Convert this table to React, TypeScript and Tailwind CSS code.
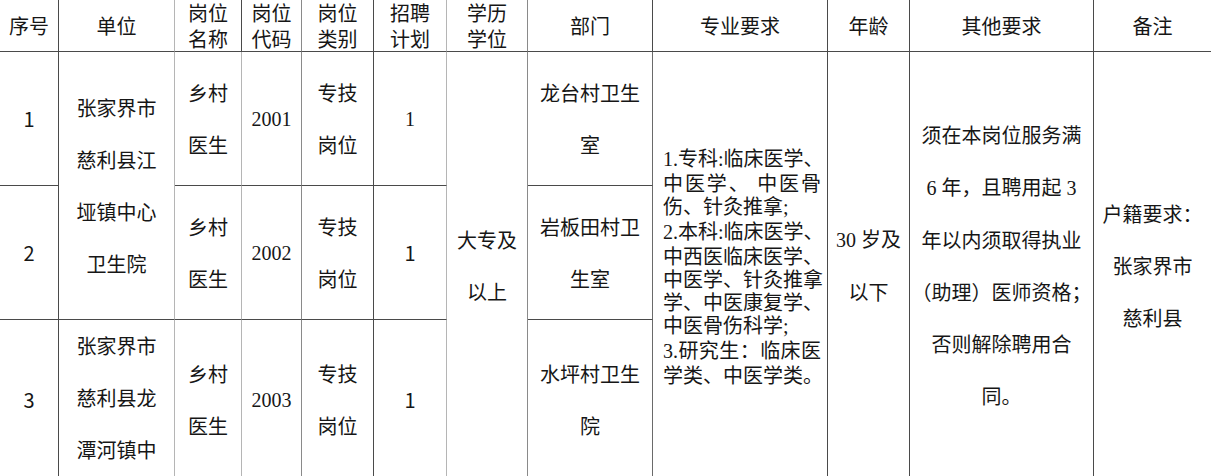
import React from 'react'

const cjk = "font-['Noto_Sans_CJK_SC','Noto_Sans',sans-serif]"
const serif = "font-['Liberation_Serif','Noto_Sans_CJK_SC',serif]"

const dark = 'border-[#4a4a4a]'

function Cell({
  className = '',
  children,
}: {
  className?: string
  children: React.ReactNode
}) {
  return (
    <div
      className={`flex flex-col items-center justify-center text-center border-r border-b ${dark} ${className}`}
    >
      {children}
    </div>
  )
}

function Head({ lines, className = '' }: { lines: string[]; className?: string }) {
  return (
    <Cell className={`row-start-1 leading-[26px] ${className}`}>
      {lines.map((l) => (
        <div key={l}>{l}</div>
      ))}
    </Cell>
  )
}

function Lines({ lines }: { lines: React.ReactNode[] }) {
  return (
    <>
      {lines.map((l, i) => (
        <div key={i} className="leading-[52px] whitespace-nowrap">
          {l}
        </div>
      ))}
    </>
  )
}

const major: { text: React.ReactNode; full: boolean }[] = [
  { text: <><span className={serif}>1.</span>专科<span className={serif}>:</span>临床医学、</>, full: true },
  { text: '中医学、 中医骨', full: true },
  { text: <>伤、针灸推拿<span className={serif}>;</span></>, full: false },
  { text: <><span className={serif}>2.</span>本科<span className={serif}>:</span>临床医学、</>, full: true },
  { text: '中西医临床医学、', full: true },
  { text: '中医学、针灸推拿', full: true },
  { text: '学、中医康复学、', full: true },
  { text: <>中医骨伤科学<span className={serif}>;</span></>, full: false },
  { text: <><span className={serif}>3.</span>研究生：临床医</>, full: true },
  { text: '学类、中医学类。', full: true },
]

const rows = [
  { no: '1', code: '2001', dept: ['龙台村卫生', '室'], planSerif: true },
  { no: '2', code: '2002', dept: ['岩板田村卫', '生室'], planSerif: false },
  { no: '3', code: '2003', dept: ['水坪村卫生', '院'], planSerif: false },
]

const rowStart = ['row-start-2', 'row-start-3', 'row-start-4']

export default function App() {
  return (
    <div className={`h-[476px] w-[1211px] overflow-hidden bg-white text-[20px] text-[#161616] ${cjk}`}>
      <div className="grid grid-cols-[59px_116px_67px_60px_72px_73px_81px_125px_175px_82px_184px_117px] grid-rows-[52px_134px_134px_160px]">
        {/* header */}
        <Head lines={['序号']} className="col-start-1" />
        <Head lines={['单位']} className="col-start-2 border-r-[#b5b5b5]" />
        <Head lines={['岗位', '名称']} className="col-start-3" />
        <Head lines={['岗位', '代码']} className="col-start-4 border-r-[#8a8a8a]" />
        <Head lines={['岗位', '类别']} className="col-start-5" />
        <Head lines={['招聘', '计划']} className="col-start-6 border-r-[#b5b5b5]" />
        <Head lines={['学历', '学位']} className="col-start-7 border-r-[#8a8a8a]" />
        <Head lines={['部门']} className="col-start-8" />
        <Head lines={['专业要求']} className="col-start-9" />
        <Head lines={['年龄']} className="col-start-10" />
        <Head lines={['其他要求']} className="col-start-11" />
        <Head lines={['备注']} className="col-start-12 border-r-0" />

        {/* per-row cells */}
        {rows.map((r, i) => (
          <React.Fragment key={r.no}>
            <Cell className={`col-start-1 ${rowStart[i]}`}>
              <div>{r.no}</div>
            </Cell>
            <Cell className={`col-start-3 ${rowStart[i]} border-r-[#b5b5b5]`}>
              <Lines lines={['乡村', '医生']} />
            </Cell>
            <Cell className={`col-start-4 ${rowStart[i]} border-r-[#8a8a8a] ${serif}`}>
              <div>{r.code}</div>
            </Cell>
            <Cell className={`col-start-5 ${rowStart[i]}`}>
              <Lines lines={['专技', '岗位']} />
            </Cell>
            <Cell className={`col-start-6 ${rowStart[i]} border-r-[#b5b5b5] ${r.planSerif ? serif : ''}`}>
              <div>1</div>
            </Cell>
            <Cell className={`col-start-8 ${rowStart[i]} border-r-[#6a6a6a]`}>
              <Lines lines={r.dept} />
            </Cell>
          </React.Fragment>
        ))}

        {/* 单位 */}
        <Cell className="col-start-2 row-start-2 row-span-2 border-r-[#b5b5b5]">
          <Lines lines={['张家界市', '慈利县江', '垭镇中心', '卫生院']} />
        </Cell>
        <Cell className="col-start-2 row-start-4 justify-start border-r-[#b5b5b5]">
          <Lines lines={['张家界市', '慈利县龙', '潭河镇中', '心卫生院']} />
        </Cell>

        {/* 学历学位 */}
        <Cell className="col-start-7 row-start-2 row-span-3 border-r-[#8a8a8a]">
          <Lines lines={['大专及', '以上']} />
        </Cell>

        {/* 专业要求 */}
        <Cell className="col-start-9 row-start-2 row-span-3 items-start pl-[10px]">
          {major.map((m, i) => (
            <div
              key={i}
              className={`w-[158px] whitespace-nowrap leading-[23px] ${
                m.full ? 'text-justify [text-align-last:justify]' : 'text-left'
              }`}
            >
              {m.text}
            </div>
          ))}
        </Cell>

        {/* 年龄 */}
        <Cell className="col-start-10 row-start-2 row-span-3">
          <Lines lines={[<><span className={serif}>30 </span>岁及</>, '以下']} />
        </Cell>

        {/* 其他要求 */}
        <Cell className="col-start-11 row-start-2 row-span-3">
          <Lines
            lines={[
              '须在本岗位服务满',
              <>
                <span className={serif}>6 </span>年，且聘用起<span className={serif}> 3</span>
              </>,
              '年以内须取得执业',
              '（助理）医师资格；',
              '否则解除聘用合',
              '同。',
            ]}
          />
        </Cell>

        {/* 备注 */}
        <Cell className="col-start-12 row-start-2 row-span-3 border-r-0">
          <Lines lines={['户籍要求：', '张家界市', '慈利县']} />
        </Cell>
      </div>
    </div>
  )
}
